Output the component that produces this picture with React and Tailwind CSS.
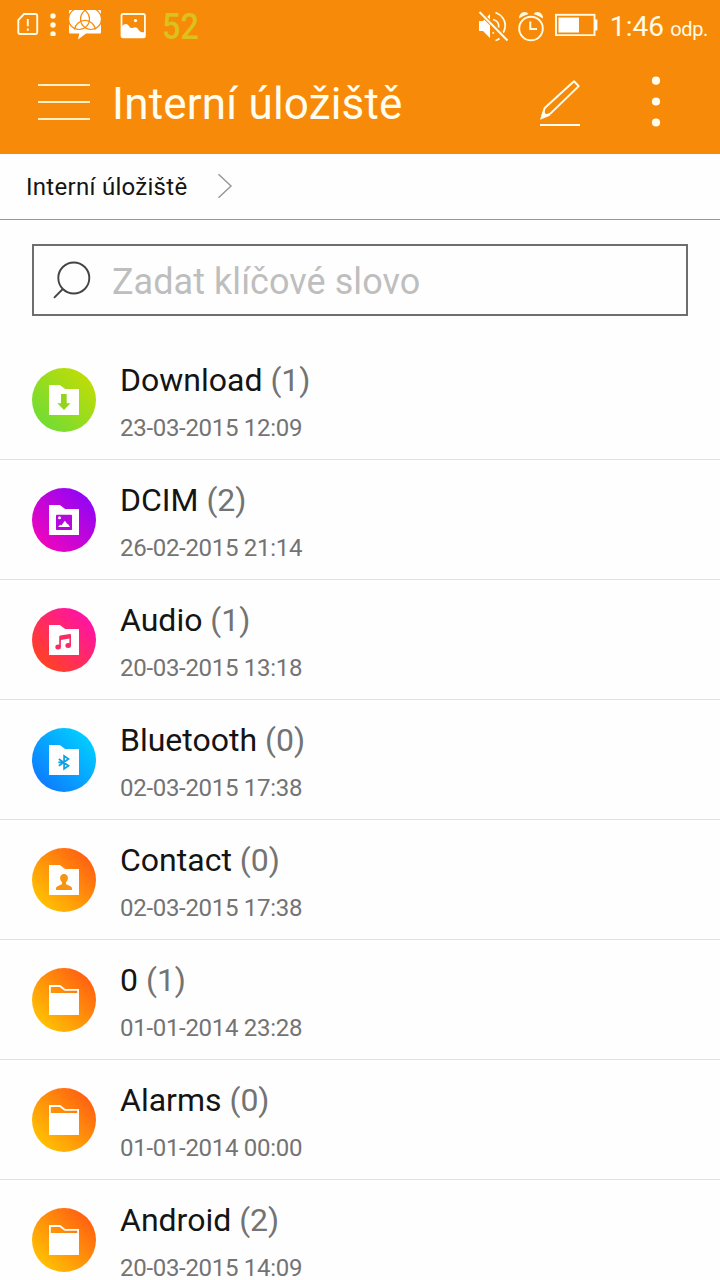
import React from "react";

const folders = [
  { name: "Download", count: 1, date: "23-03-2015 12:09", type: "download" },
  { name: "DCIM", count: 2, date: "26-02-2015 21:14", type: "image" },
  { name: "Audio", count: 1, date: "20-03-2015 13:18", type: "audio" },
  { name: "Bluetooth", count: 0, date: "02-03-2015 17:38", type: "bluetooth" },
  { name: "Contact", count: 0, date: "02-03-2015 17:38", type: "contact" },
  { name: "0", count: 1, date: "01-01-2014 23:28", type: "folder" },
  { name: "Alarms", count: 0, date: "01-01-2014 00:00", type: "folder" },
  { name: "Android", count: 2, date: "20-03-2015 14:09", type: "folder" },
];

const circles = {
  download: "bg-linear-45/srgb from-[#64dc3c] to-[#cddc00]",
  image: "bg-linear-45/srgb from-[#ff05b4] to-[#8205ff]",
  audio: "bg-linear-45/srgb from-[#ff4b0a] to-[#ff0abe]",
  bluetooth: "bg-linear-45/srgb from-[#0f6eff] to-[#00dcff]",
  contact: "bg-linear-45/srgb from-[#ffd200] to-[#ff5014]",
  folder: "bg-linear-45/srgb from-[#ffd200] to-[#ff5014]",
};

const glyphs = {
  download: (
    <path fill="#94d41f" d="M29 26h5.7v9.3h3.8L32 42l-6.7-6.7H29z" />
  ),
  image: (
    <>
      <rect x="24" y="26.7" width="16" height="15.3" rx="0.8" fill="#b408dc" />
      <circle cx="27.5" cy="29.8" r="1.5" fill="#fff" />
      <path fill="#fff" d="M26 39l2.2-2.3 1.3.5 3.4-4.5 2.3 3 1 .6 1.8 2.7z" />
    </>
  ),
  audio: (
    <g fill="#f52d64">
      <ellipse cx="26.1" cy="39.1" rx="2.8" ry="2.5" />
      <ellipse cx="36.2" cy="37.4" rx="2.8" ry="2.5" />
      <path d="M27.2 39V28.6q0-1 1-1.2l9.6-1.5q1.2-.1 1.2 1v10.5h-1.6v-6.8l-8.5 1.3V39z" />
    </g>
  ),
  bluetooth: (
    <path
      fill="none"
      stroke="#0fa0e6"
      strokeWidth="1.7"
      d="M26.8 31l9.7 6.8-4.4 3V27.9l4.4 3.1-9.7 6.8M26.3 34.4h4"
    />
  ),
  contact: (
    <path
      fill="#f89414"
      d="M32 26c2.5 0 3.9 1.8 3.9 4.1 0 1.8-.8 3.2-1.9 4.2v1.8c1 1.2 6 1.8 6 4.3V42H24v-1.6c0-2.5 5-3.1 6-4.3v-1.8c-1.1-1-1.9-2.4-1.9-4.2 0-2.3 1.4-4.1 3.9-4.1z"
    />
  ),
};

const FolderIcon = ({ type }) => {
  return (
    <div className={`w-16 h-16 shrink-0 rounded-full ${circles[type]}`}>
      <svg viewBox="0 0 64 64" className="w-16 h-16">
        {type === "folder" ? (
          <path
            fill="#fff"
            fillRule="evenodd"
            d="M17 17h11.2l5 4H47v26H17zM18.8 18.900V25h26.400v-2.300H32.600l-5-3.800z"
          />
        ) : (
          <path fill="#fff" d="M17 17h10.8l5.4 4H47v26H17z" />
        )}
        {glyphs[type]}
      </svg>
    </div>
  );
};

const StatusBar = () => {
  return (
    <div className="flex h-[50px] text-[#fffbe6]">
      <svg className="ml-[17px] mt-3 w-[22px] h-6" viewBox="0 0 22 24" fill="none" stroke="currentColor" strokeWidth="1.9">
        <path d="M7 2h11.5q1.7 0 1.7 1.7v16.6q0 1.7-1.7 1.7H3q-1.7 0-1.7-1.7V8.2z" />
        <path d="M10.8 7v7.2M10.8 16.5v2.2" />
      </svg>
      <svg className="ml-[11px] mt-3 w-1.5 h-6" viewBox="0 0 6 24" fill="currentColor">
        <circle cx="3" cy="4" r="2.7" />
        <circle cx="3" cy="13" r="2.7" />
        <circle cx="3" cy="22" r="2.7" />
      </svg>
      <svg className="ml-[13px] mt-2.5 w-8 h-[30px]" viewBox="0 0 32 30">
        <path fill="#fff" d="M1 0h30q1 0 1 1v21.500q0 1-1 1H17L9 29.500l1.300-6H1q-1 0-1-1V1q0-1 1-1z" />
        <g fill="none" stroke="#f78b09" strokeWidth="1.200">
          <circle cx="10" cy="9" r="10.500" />
          <circle cx="22" cy="9" r="10.500" />
          <path d="M5.600 19.500A10.500 10.500 0 0 1 26.400 19.500" />
        </g>
      </svg>
      <svg className="ml-[19px] mt-3 w-[26px] h-[27px]" viewBox="0 0 26 27">
        <rect x="1.500" y="2" width="23.400" height="23.400" rx="1.600" fill="none" stroke="currentColor" strokeWidth="1.800" />
        <path fill="#fff" d="M1.500 15c1.500-2 2.500-3 4.500-3 3 0 3 4 5.500 4 2 0 1.500-.8 3.500-.8 3.500 0 3.500 5 7.500 5h2.400v5.500H1.500z" />
        <circle cx="15.500" cy="8.600" r="1.600" fill="#fff" />
      </svg>
      <span className="ml-4 mt-[7px] w-[37px] h-10 origin-left scale-x-[.9] text-[36px] leading-10 font-medium text-[#dcc01c]">
        52
      </span>

      <svg className="ml-auto mt-2.5 w-[31px] h-8" viewBox="0 0 31 32">
        <path fill="#fff" d="M1 11h4l7-7v24l-7-7H1z" />
        <g fill="none" stroke="currentColor" strokeWidth="1.800">
          <path d="M17.500 2.500C24 5 28.500 11 26.800 18.500q-.5 2.500-1.800 4.500M21.500 28.500q-2 1.500-4 2M15 9.500c4 1 6.200 4 5.700 8M16 22.500l-1.500.7" />
          <path stroke="#f78b09" strokeWidth="4" d="M2 2.500l27 27" />
          <path strokeWidth="2" d="M1.500 2l28 28.500" />
        </g>
      </svg>
      <svg className="ml-2 mt-2.5 w-7 h-8" viewBox="0 0 28 32" fill="none" stroke="currentColor" strokeWidth="1.900">
        <circle cx="14" cy="18.500" r="11.800" />
        <path d="M13.300 11.500V19H20" strokeWidth="2" />
        <path fill="currentColor" stroke="none" d="M2 8.500Q2 3 7 2q3-.3 4.500 2Q6 5.500 2 8.500zM26 8.500Q26 3 21 2q-3-.3-4.500 2Q22 5.500 26 8.500z" />
      </svg>
      <svg className="ml-2.5 mt-3 w-[43px] h-6" viewBox="0 0 43 24">
        <rect x="1" y="2.800" width="38.500" height="20.400" fill="none" stroke="currentColor" strokeWidth="1.900" />
        <path fill="#fff" d="M3.500 5.500h20.500v15H3.500zM40 7.500h2.400v11H40z" />
      </svg>
      <div className="ml-3 mr-3 mt-[7px] flex items-baseline h-10 leading-10 whitespace-nowrap">
        <span className="text-[28px] tracking-[.1px]">1:46</span>
        <span className="ml-1.5 text-[20px] tracking-[-.35px]">odp.</span>
      </div>
    </div>
  );
};

const Header = () => {
  return (
    <div className="flex h-[104px] text-[#fffdf0]">
      <button className="ml-[38px] mt-[34px] flex flex-col w-[52px] h-9 justify-between">
        <span className="w-full h-0.5 bg-[#fff0c8]" />
        <span className="w-full h-0.5 bg-[#fff0c8]" />
        <span className="w-full h-0.5 bg-[#fff0c8]" />
      </button>
      <h1 className="ml-[22px] mt-7 h-[52px] text-[44px] leading-[52px] tracking-[.18px] whitespace-nowrap">
        Interní úložiště
      </h1>
      <button className="ml-auto mt-7 w-11 h-12">
        <svg viewBox="0 0 44 48" className="w-11 h-12" fill="none" stroke="currentColor" strokeWidth="2">
          <path strokeLinejoin="round" d="M36 3.300l4.700 4.800-28.300 27.500-5.900 2.500-2-.5 2.200-7.500z" />
          <path fill="currentColor" stroke="none" d="M2 41.800l3.500-11 1.700 4.800 5.300 2z" />
          <path d="M2 47h40" />
        </svg>
      </button>
      <button className="ml-[68px] mr-[58px] mt-[25px] w-3 h-[54px]">
        <svg viewBox="0 0 12 54" className="w-3 h-[54px]" fill="currentColor">
          <circle cx="6" cy="5.700" r="4.100" />
          <circle cx="6" cy="26.500" r="4.100" />
          <circle cx="6" cy="47.500" r="4.100" />
        </svg>
      </button>
    </div>
  );
};

const FolderRow = ({ folder }) => {
  return (
    <li className="flex items-center h-[120px] shrink-0 pl-8 border-b border-[#e1e1e1]">
      <FolderIcon type={folder.type} />
      <div className="ml-6 whitespace-nowrap">
        <p className="text-[32px] leading-10 text-[#141414]">
          {folder.name} <span className="text-[#737373]">({folder.count})</span>
        </p>
        <p className="mt-4 mb-[-1px] text-[24px] leading-6 tracking-[-.3px] text-[#737373]">
          {folder.date}
        </p>
      </div>
    </li>
  );
};

const App = () => {
  return (
    <div className="flex flex-col w-[720px] h-[1280px] overflow-hidden bg-[#fefefe] font-['Roboto',sans-serif]">
      <div className="shrink-0 bg-[#f78b09]">
        <StatusBar />
        <Header />
      </div>
      <div className="flex items-center shrink-0 h-[66px] pl-[26px] border-b border-[#969696]">
        <span className="text-[24px] leading-8 tracking-[.28px] text-[#141414] whitespace-nowrap">
          Interní úložiště
        </span>
        <svg viewBox="0 0 16 28" className="ml-[30px] mb-0.5 w-4 h-7" fill="none" stroke="#999" strokeWidth="1.500">
          <path d="M1.500 2.200L14 14 1.500 25.800" />
        </svg>
      </div>
      <div className="flex items-center shrink-0 mt-6 mx-8 mb-6 h-[72px] pl-[18px] border-2 border-[#6e6e6e]">
        <svg viewBox="0 0 40 40" className="w-10 h-10 shrink-0" fill="none" stroke="#444" strokeWidth="1.900">
          <circle cx="21.800" cy="18" r="15.500" />
          <path d="M10.800 29L2 37.800" />
        </svg>
        <span className="ml-5 mt-1 text-[36px] leading-[44px] tracking-[.05px] text-[#bebebe] whitespace-nowrap">
          Zadat klíčové slovo
        </span>
      </div>
      <ul className="flex flex-col">
        {folders.map((folder) => (
          <FolderRow key={folder.name} folder={folder} />
        ))}
      </ul>
    </div>
  );
};

export default App;
